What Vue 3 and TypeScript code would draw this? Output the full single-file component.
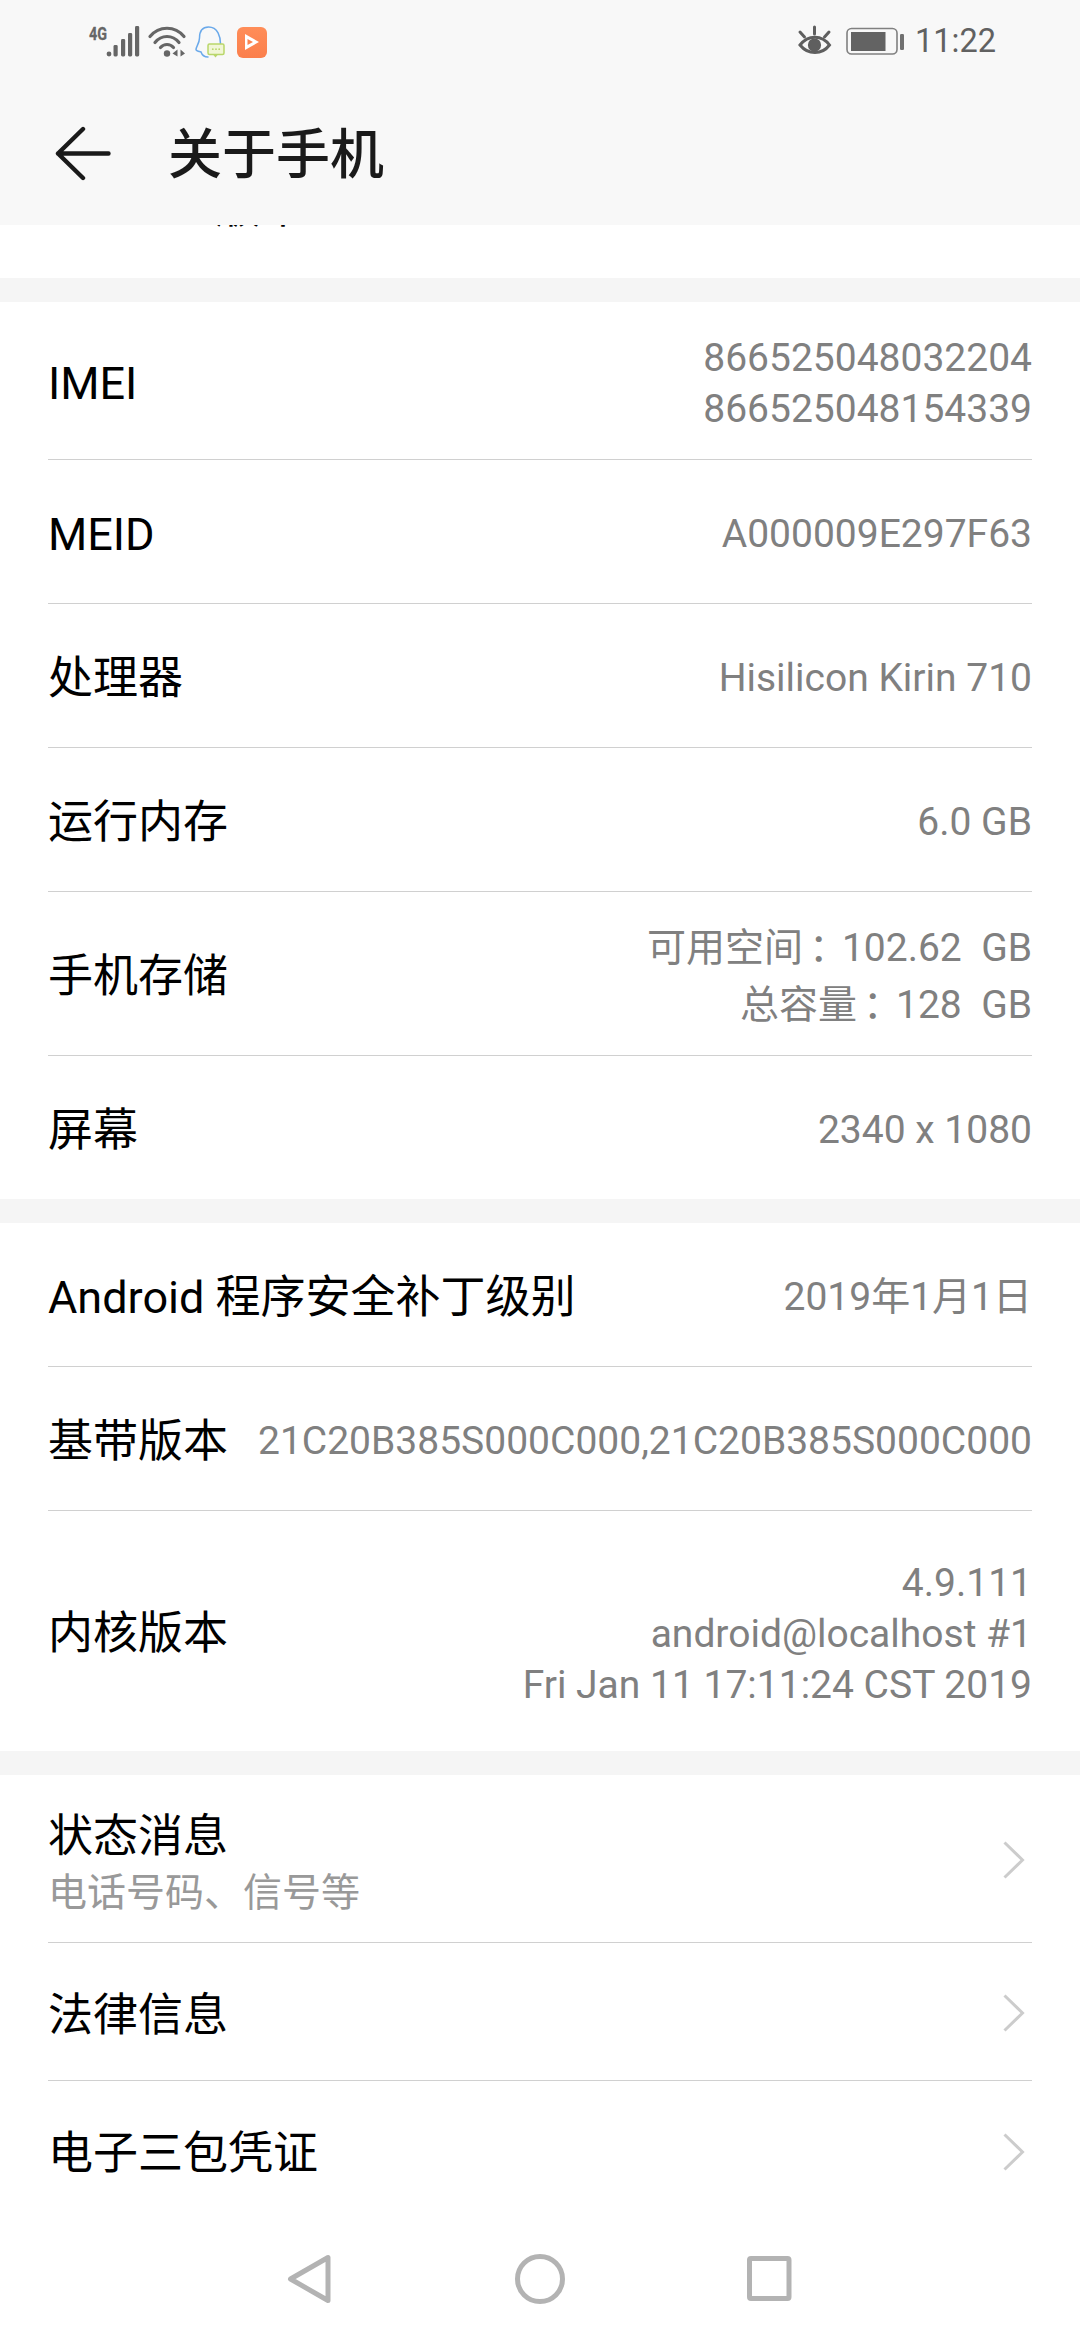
<script setup lang="ts">
interface Row {
  label: string
  value: string[]
  h: number
  cjk?: boolean
}

const groupA: Row[] = [
  { label: 'IMEI', value: ['866525048032204', '866525048154339'], h: 158 },
  { label: 'MEID', value: ['A000009E297F63'], h: 144 },
  { label: '处理器', value: ['Hisilicon Kirin 710'], h: 144 },
  { label: '运行内存', value: ['6.0 GB'], h: 144 },
  { label: '手机存储', value: ['可用空间：102.62  GB', '总容量：128  GB'], h: 164, cjk: true },
  { label: '屏幕', value: ['2340 x 1080'], h: 143 },
]

const groupB: Row[] = [
  { label: 'Android 程序安全补丁级别', value: ['2019年1月1日'], h: 144 },
  { label: '基带版本', value: ['21C20B385S000C000,21C20B385S000C000'], h: 144 },
  { label: '内核版本', value: ['4.9.111', 'android@localhost #1', 'Fri Jan 11 17:11:24 CST 2019'], h: 240 },
]

const links = [
  { label: '状态消息', sub: '电话号码、信号等', h: 168 },
  { label: '法律信息', sub: '', h: 138 },
  { label: '电子三包凭证', sub: '', h: 138 },
]

const head = (v: string): string => v.split('：')[0]
const tail = (v: string): string => v.split('：')[1]
</script>

<template>
  <div class="phone">
    <header class="appbar">
      <div class="status">
        <svg class="status-left" viewBox="88 20 182 40" width="182" height="40">
          <text x="89" y="38.5" class="net" textLength="18" lengthAdjust="spacingAndGlyphs">4G</text>
          <g fill="#666">
            <circle cx="109" cy="53" r="2.4" />
            <rect x="113.5" y="44" width="4.2" height="11.5" rx="1.4" />
            <rect x="121" y="38" width="4.2" height="17.5" rx="1.4" />
            <rect x="128" y="32" width="4.2" height="23.5" rx="1.4" />
            <rect x="135" y="25" width="4.2" height="30.5" rx="1.4" />
            <circle cx="167" cy="52.5" r="3.2" />
            <path d="M172.5 52.5 177.5 48.5V55.5ZM185 52.5 180.5 48.5V55.5Z" />
          </g>
          <g fill="none" stroke="#666" stroke-width="3.2" stroke-linecap="round">
            <path d="M150 35.5C159 24.5 175 24.5 184 35.5" />
            <path d="M155 41.5C161.5 33.5 172.5 33.5 179 41.5" />
            <path d="M160.5 46.5C164 42.5 170 42.5 173.5 46.5" />
          </g>
          <path
            d="M220.5 43C220.5 36 218 26 208.5 26C202 26 199.5 31 199.5 37C199.5 42 196 46 196 48.5C196 50 199 50.5 201 51C202 54 204 56 208 56"
            fill="none"
            stroke="#6aa9ea"
            stroke-width="1.5"
            stroke-linecap="round"
          />
          <rect x="208" y="43" width="16" height="10.5" rx="1.5" fill="#f1f6d6" stroke="#b9d66a" stroke-width="1.5" />
          <path d="M213 53.5H218L215.5 56.5Z" fill="#b9d66a" />
          <g fill="#b9d66a">
            <circle cx="212.8" cy="48.2" r="0.9" />
            <circle cx="216" cy="48.2" r="0.9" />
            <circle cx="219.2" cy="48.2" r="0.9" />
          </g>
          <rect x="237" y="26" width="30" height="31" rx="6" fill="url(#orange)" />
          <path d="M245 33 259 41 245 49Z" fill="#fff" />
          <path d="M247.5 38 253 41 247.5 44Z" fill="#fb8350" />
          <defs>
            <linearGradient id="orange" x1="0" y1="0" x2="0" y2="1">
              <stop offset="0" stop-color="#ff8d58" />
              <stop offset="1" stop-color="#fb7f4c" />
            </linearGradient>
          </defs>
        </svg>
        <div class="status-right">
          <svg viewBox="794 24 110 32" width="110" height="32">
            <g fill="none" stroke="#5f5f5f" stroke-width="3" stroke-linecap="round">
              <path d="M798 44C806 33.5 820 33.5 827.5 44C820 54 806 54 798 44Z" />
              <path d="M812.5 26V33M798 31 802.5 36M827 31 822.5 36" />
            </g>
            <circle cx="812.5" cy="44" r="6.6" fill="#5f5f5f" />
            <rect x="845" y="27.5" width="50" height="25.5" rx="4.5" fill="none" stroke="#808080" stroke-width="1.6" />
            <rect x="849" y="31" width="34.5" height="19" fill="#636363" />
            <rect x="898" y="33" width="4" height="16" rx="1.2" fill="#707070" />
          </svg>
          <span class="time">11:22</span>
        </div>
      </div>
      <div class="toolbar">
        <svg viewBox="55 125 57 56" width="57" height="56">
          <path
            d="M83 129 58 153.5 83 178M58 153.5H108.5"
            fill="none"
            stroke="#1a1a1a"
            stroke-width="4.4"
            stroke-linecap="round"
            stroke-linejoin="round"
          />
        </svg>
        <h1 class="title">关于手机</h1>
      </div>
    </header>

    <div class="clipped"><span class="clipped-text">Android 版本</span></div>

    <div class="gap"></div>

    <section class="group">
      <div v-for="r in groupA" :key="r.label" class="row" :style="{ height: r.h + 'px' }">
        <span class="label">{{ r.label }}</span>
        <div class="value" :class="{ 'value-cjk': r.cjk }">
          <div v-for="v in r.value" :key="v">
            <template v-if="r.cjk">{{ head(v) }}<span class="colon">：</span>{{ tail(v) }}</template>
            <template v-else>{{ v }}</template>
          </div>
        </div>
      </div>
    </section>

    <div class="gap"></div>

    <section class="group">
      <div v-for="r in groupB" :key="r.label" class="row" :style="{ height: r.h + 'px' }">
        <span class="label">{{ r.label }}</span>
        <div class="value">
          <div v-for="v in r.value" :key="v">{{ v }}</div>
        </div>
      </div>
    </section>

    <div class="gap"></div>

    <section class="group links">
      <div v-for="l in links" :key="l.label" class="row" :style="{ height: l.h + 'px' }">
        <div class="link-text">
          <span class="label">{{ l.label }}</span>
          <span v-if="l.sub" class="sub">{{ l.sub }}</span>
        </div>
        <svg class="chev" viewBox="0 0 24 40" width="24" height="40">
          <path d="M3.5 2.5 21.5 20 3.5 37.5" fill="none" stroke="#cccccc" stroke-width="3" />
        </svg>
      </div>
    </section>

    <nav class="navbar">
      <svg viewBox="240 2220 600 120" width="600" height="120">
        <g fill="none" stroke="#b3b3b3" stroke-width="5" stroke-linejoin="round">
          <path d="M328 2258.5V2301.5L290.5 2280Z" />
          <circle cx="540" cy="2280" r="22.5" />
          <rect x="749.5" y="2259.5" width="39.5" height="40" rx="1.5" />
        </g>
      </svg>
    </nav>
  </div>
</template>

<style scoped>
.phone {
  width: 1080px;
  height: 2340px;
  overflow: hidden;
  background: #ffffff;
  font-family: Roboto, "Noto Sans CJK SC", sans-serif;
  color: #000;
}
.appbar {
  background: #f8f8f8;
}
.status {
  height: 81px;
  display: flex;
  align-items: center;
  justify-content: space-between;
  padding: 0 84px 0 88px;
}
.status-left,
.status-right svg {
  display: block;
}
.net {
  font: 700 19px Roboto, sans-serif;
  fill: #666;
  stroke: #666;
  stroke-width: 0.3px;
}
.status-right {
  display: flex;
  align-items: center;
  gap: 9px;
}
.time {
  font-size: 32.5px;
  line-height: 40px;
  color: #616161;
}
.toolbar {
  height: 144px;
  display: flex;
  align-items: center;
  padding-left: 55px;
}
.title {
  margin: 6px 0 0 56px;
  font-size: 54px;
  line-height: 64px;
  font-weight: 500;
  color: #1a1a1a;
}
.clipped {
  height: 53px;
  overflow: hidden;
  padding-left: 48px;
}
.clipped-text {
  display: block;
  margin-top: -47px;
  font-size: 45px;
  line-height: 60px;
}
.gap {
  height: 24px;
  background: #f5f5f5;
}
.row {
  box-sizing: border-box;
  margin: 0 48px;
  padding-top: 6px;
  display: flex;
  align-items: center;
  justify-content: space-between;
  border-bottom: 1.5px solid #d0d0d0;
}
.group .row:last-child {
  border-bottom: 0;
}
.links .row {
  padding-top: 8px;
}
.label {
  font-size: 45px;
  line-height: 60px;
  white-space: nowrap;
}
.value {
  font-size: 39px;
  line-height: 51px;
  color: #808080;
  text-align: right;
  white-space: pre;
}
.value-cjk {
  line-height: 57px;
}
.colon {
  padding-left: 6px;
  letter-spacing: -6px;
}
.link-text {
  display: flex;
  flex-direction: column;
}
.sub {
  font-size: 39px;
  line-height: 52px;
  color: #999;
}
.chev {
  display: block;
  margin: -5px 7px 0 0;
}
.navbar {
  height: 120px;
  display: flex;
  justify-content: center;
}
</style>
